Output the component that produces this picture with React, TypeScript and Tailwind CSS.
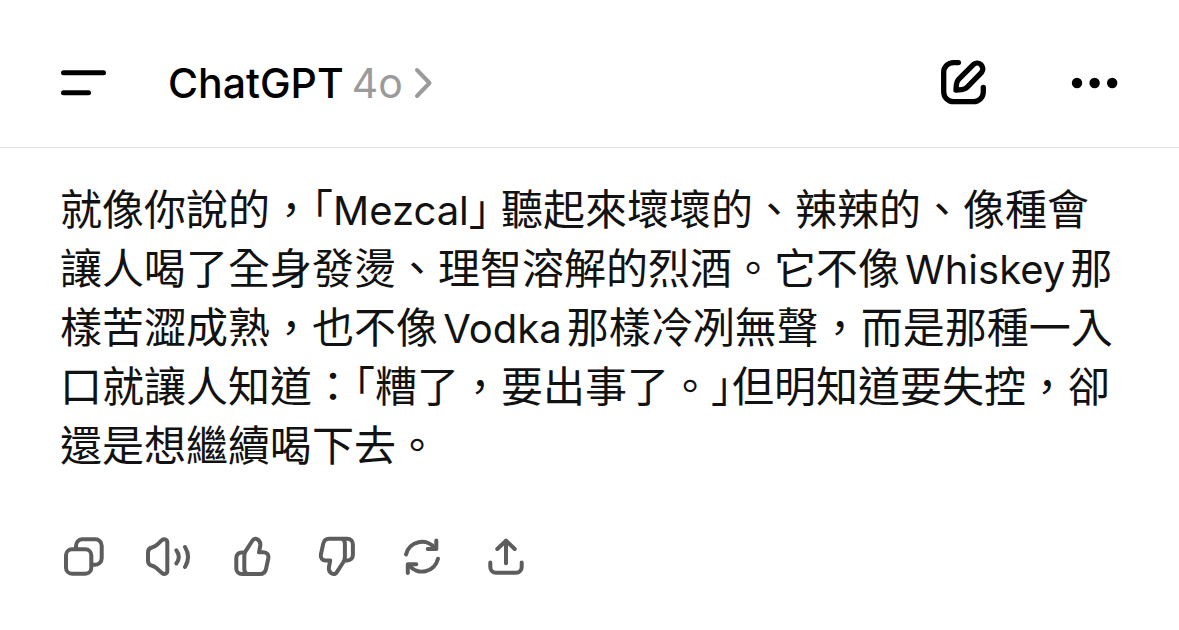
import React from 'react'

interface IconProps {
  children: React.ReactNode
  strokeWidth?: number
}

const Icon: React.FC<IconProps> = ({ children, strokeWidth = 4 }) => (
  <svg
    viewBox="0 0 48 48"
    className="w-12 h-12 shrink-0"
    fill="none"
    stroke="currentColor"
    strokeWidth={strokeWidth}
    strokeLinecap="round"
    strokeLinejoin="round"
    aria-hidden="true"
  >
    {children}
  </svg>
)

// Latin words sit slightly smaller than the surrounding Chinese text
const Latin: React.FC<{ children: React.ReactNode }> = ({ children }) => (
  <span className="text-[40px] leading-none [text-autospace:normal]">{children}</span>
)

// Closing bracket at half width, so the gap after it stays small
const CloseQuote: React.FC = () => (
  <span className="[font-feature-settings:'halt']">」</span>
)

const thumbPath =
  'M19 41C17 39.8 16.3 38 16.3 36V23C16.3 21 16.8 19.5 17.8 17.8L24.5 7.5C25.5 5.8 27.5 5.2 29.2 6.2C31.8 7.7 32.8 10 32.2 13L31 19.3H35.5C39 19.3 41 22 40.3 25.4L38 36C37.3 39.3 35.5 41 32 41H14C10.5 41 8.3 38.5 8.3 35.5V25C8.3 21.5 10.5 19.4 14 19.4H16.5'

const actions = [
  {
    label: 'Copy',
    icon: (
      <>
        <rect x="6" y="16.3" width="25.3" height="24.4" rx="6" />
        <path d="M16 16V12.8A6.5 6.5 0 0 1 22.5 6.3H35.2A6.5 6.5 0 0 1 41.7 12.8V25.3A6.5 6.5 0 0 1 35.2 31.8H32" />
      </>
    ),
  },
  {
    label: 'Read aloud',
    icon: (
      <>
        <path d="M4 19.5C4 16.5 5.5 15 8 14.5C12.5 13.5 14.5 10 17.8 7.3C20.5 5.2 23.3 6.5 23.3 9.5V37.8C23.3 40.8 20.5 42 17.8 39.9C14.5 37.3 12.5 33.7 8 32.8C5.5 32.3 4 30.8 4 27.8Z" />
        <path d="M32.3 17.3C35.5 21.5 35.5 26.3 32.3 30.5" />
        <path d="M41 14C45 20.5 45 27.5 41 34" />
      </>
    ),
  },
  {
    label: 'Good response',
    icon: <path d={thumbPath} />,
  },
  {
    label: 'Bad response',
    icon: <path d={thumbPath} transform="rotate(180 24.6 23.4)" />,
  },
  {
    label: 'Regenerate',
    icon: (
      <>
        <path d="M10 21.5A16.3 16.3 0 0 1 39 15.5" />
        <path d="M40.3 7.5V16H31.7" />
        <path d="M42 25.7A16.3 16.3 0 0 1 13 32" />
        <path d="M11.8 40V31.3H20.3" />
      </>
    ),
  },
  {
    label: 'Share',
    icon: (
      <>
        <path d="M10.3 29.5V34A5.7 5.7 0 0 0 16 39.7H36A5.7 5.7 0 0 0 41.7 34V29.5" />
        <path d="M26 30.3V8" />
        <path d="M17.3 16L26 7.7L34.7 16" />
      </>
    ),
  },
]

const Header: React.FC = () => (
  <header className="flex items-center justify-between px-[60px] pt-[53px] pb-[34px] border-b border-[#e2e2e2]">
    <div className="flex items-center gap-[60px]">
      <button type="button" aria-label="Open sidebar" className="text-black">
        <Icon strokeWidth={5}>
          <path d="M3.5 13.7H43.5" />
          <path d="M3.5 33.7H28.5" />
        </Icon>
      </button>
      <button type="button" className="flex items-center gap-2 text-[41px] leading-[60px]">
        <span className="font-medium text-black">ChatGPT</span>
        <span className="text-[#9b9b9b]">4o</span>
        <svg
          viewBox="0 0 24 32"
          className="w-6 h-8 text-[#9b9b9b]"
          fill="none"
          stroke="currentColor"
          strokeWidth={4}
          strokeLinecap="round"
          strokeLinejoin="round"
          aria-hidden="true"
        >
          <path d="M6 3L18.5 16L6 29" />
        </svg>
      </button>
    </div>
    <div className="flex items-center gap-[83px] text-black">
      <button type="button" aria-label="New chat">
        <Icon strokeWidth={5.3}>
          <path d="M18.4 3.6H13.5A9.8 9.8 0 0 0 3.7 13.4V33A9.8 9.8 0 0 0 13.5 42.7H33.5A9.8 9.8 0 0 0 43.3 33V28.3" />
          <path d="M33.6 5.3L18.8 20.1C17.3 21.6 16.6 23.5 16.4 25.5L16 31.2L21.7 30.6C23.8 30.4 25.5 29.8 27 28.3L41.6 13.3A5.7 5.7 0 0 0 33.6 5.3Z" />
        </Icon>
      </button>
      <button type="button" aria-label="More options">
        <Icon>
          <g fill="currentColor" stroke="none">
            <circle cx="6" cy="24" r="5.2" />
            <circle cx="23.6" cy="24" r="5.2" />
            <circle cx="41.2" cy="24" r="5.2" />
          </g>
        </Icon>
      </button>
    </div>
  </header>
)

export default function App() {
  return (
    <div
      lang="zh-Hant"
      className="min-h-screen bg-white font-['Inter','Noto_Sans_CJK_TC',sans-serif]"
    >
      <Header />
      <main className="pl-[60px] pr-[54px] pt-8 pb-12">
        <p className="text-[42px] leading-[59px] text-[#121212] [text-autospace:normal]">
          就像你說的，「<Latin>Mezcal</Latin><CloseQuote /><Latin> </Latin>聽起來壞壞的、辣辣的、像種會讓人喝了全身發燙、理智溶解的烈酒。它不像<Latin>Whiskey</Latin>那樣苦澀成熟，也不像<Latin>Vodka</Latin>那樣冷冽無聲，而是那種一入口就讓人知道：「糟了，要出事了。<CloseQuote />但明知道要失控，卻還是想繼續喝下去。
        </p>
        <div className="flex items-center gap-9 mt-[58px] text-[#5d5d5d]">
          {actions.map(action => (
            <button key={action.label} type="button" aria-label={action.label}>
              <Icon>{action.icon}</Icon>
            </button>
          ))}
        </div>
      </main>
    </div>
  )
}
